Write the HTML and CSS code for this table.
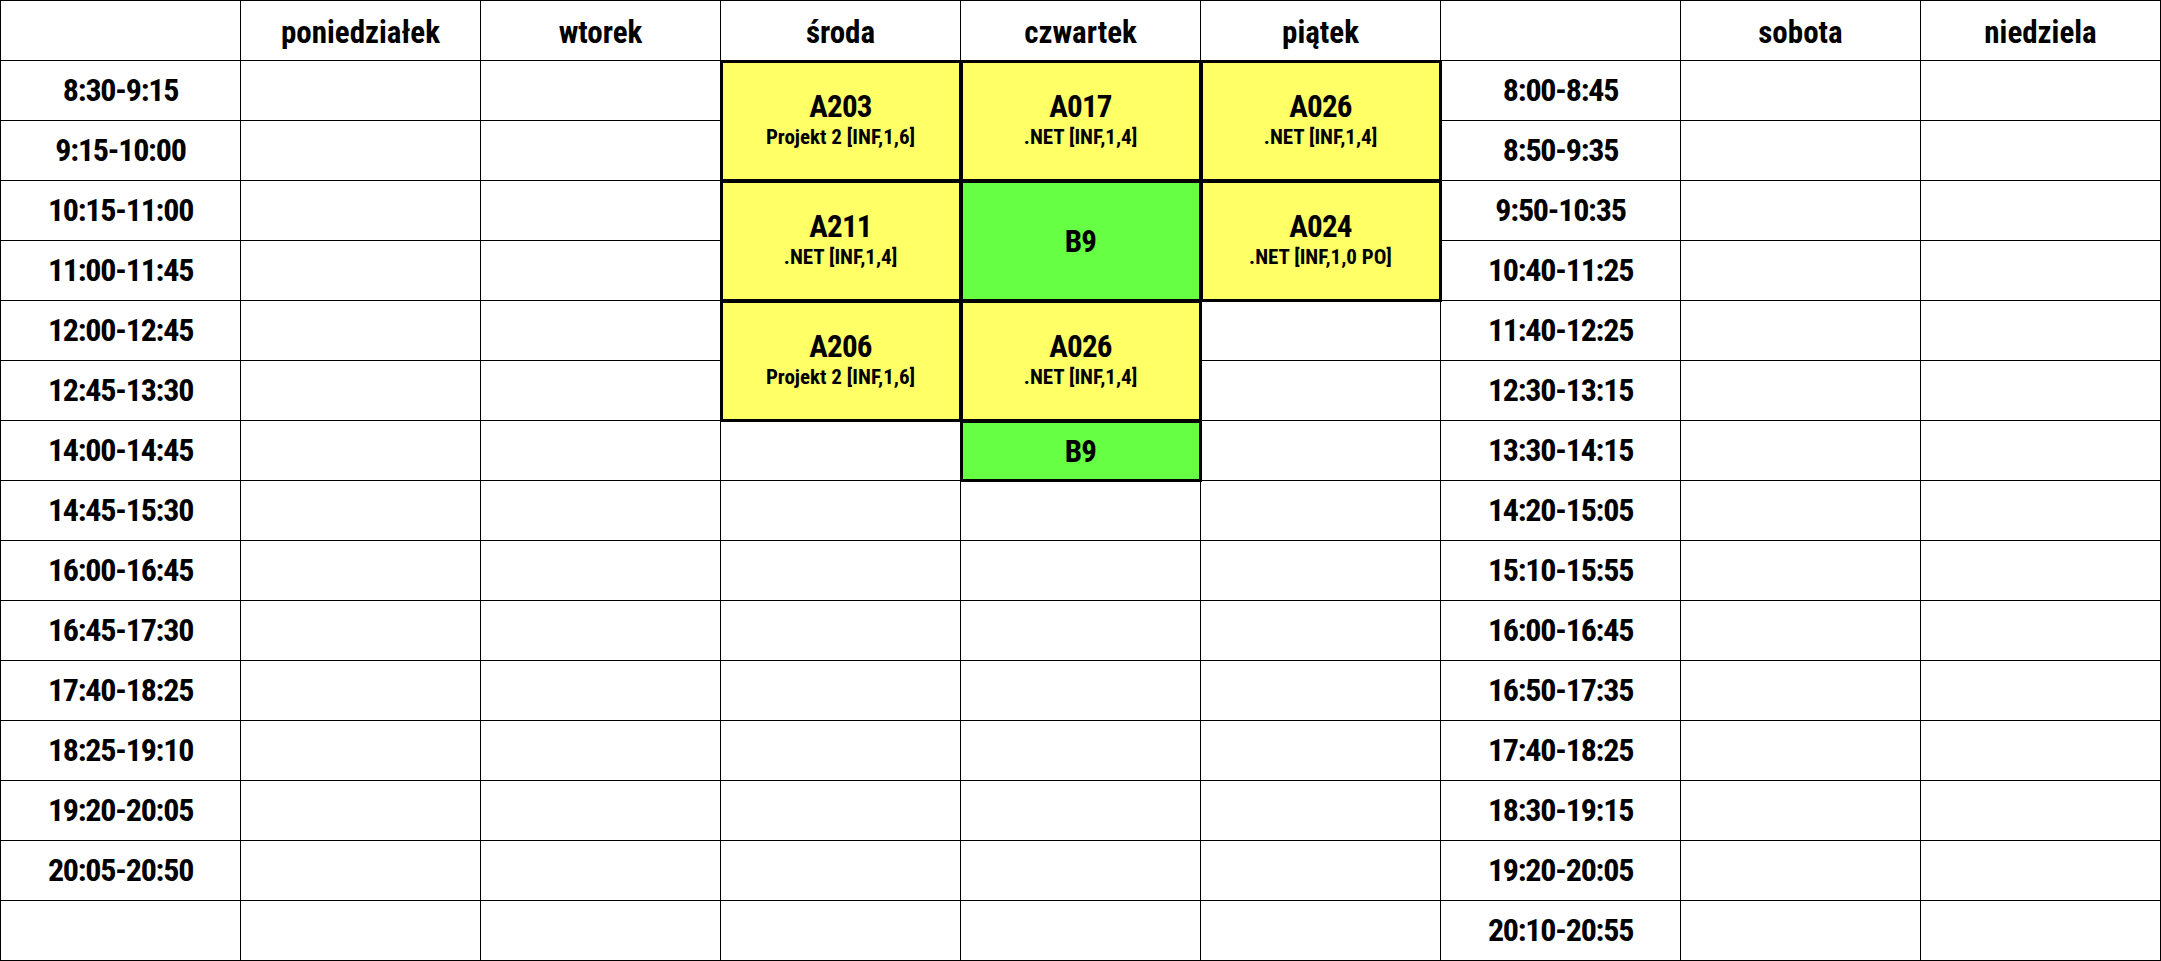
FILE: index.html
```html
<!DOCTYPE html>
<html lang="pl">
<head>
<meta charset="utf-8">
<title>Plan zajęć</title>
<link rel="stylesheet" href="styles.css">
</head>
<body>
<div class="plan">
  <div class="cell head"></div>
  <div class="cell head">poniedziałek</div>
  <div class="cell head">wtorek</div>
  <div class="cell head">środa</div>
  <div class="cell head">czwartek</div>
  <div class="cell head">piątek</div>
  <div class="cell head"></div>
  <div class="cell head">sobota</div>
  <div class="cell head">niedziela</div>

  <div class="cell time">8:30-9:15</div>
  <div class="cell"></div>
  <div class="cell"></div>
  <div class="cell block yellow span2"><span class="room">A203</span><span class="subj">Projekt 2 [INF,1,6]</span></div>
  <div class="cell block yellow span2"><span class="room">A017</span><span class="subj">.NET [INF,1,4]</span></div>
  <div class="cell block yellow span2"><span class="room">A026</span><span class="subj">.NET [INF,1,4]</span></div>
  <div class="cell time">8:00-8:45</div>
  <div class="cell"></div>
  <div class="cell"></div>

  <div class="cell time">9:15-10:00</div>
  <div class="cell"></div>
  <div class="cell"></div>
  <div class="cell time">8:50-9:35</div>
  <div class="cell"></div>
  <div class="cell"></div>

  <div class="cell time">10:15-11:00</div>
  <div class="cell"></div>
  <div class="cell"></div>
  <div class="cell block yellow span2"><span class="room">A211</span><span class="subj">.NET [INF,1,4]</span></div>
  <div class="cell block green span2"><span class="room">B9</span></div>
  <div class="cell block yellow span2"><span class="room">A024</span><span class="subj">.NET [INF,1,0 PO]</span></div>
  <div class="cell time">9:50-10:35</div>
  <div class="cell"></div>
  <div class="cell"></div>

  <div class="cell time">11:00-11:45</div>
  <div class="cell"></div>
  <div class="cell"></div>
  <div class="cell time">10:40-11:25</div>
  <div class="cell"></div>
  <div class="cell"></div>

  <div class="cell time">12:00-12:45</div>
  <div class="cell"></div>
  <div class="cell"></div>
  <div class="cell block yellow span2"><span class="room">A206</span><span class="subj">Projekt 2 [INF,1,6]</span></div>
  <div class="cell block yellow span2"><span class="room">A026</span><span class="subj">.NET [INF,1,4]</span></div>
  <div class="cell"></div>
  <div class="cell time">11:40-12:25</div>
  <div class="cell"></div>
  <div class="cell"></div>

  <div class="cell time">12:45-13:30</div>
  <div class="cell"></div>
  <div class="cell"></div>
  <div class="cell"></div>
  <div class="cell time">12:30-13:15</div>
  <div class="cell"></div>
  <div class="cell"></div>

  <div class="cell time">14:00-14:45</div>
  <div class="cell"></div>
  <div class="cell"></div>
  <div class="cell"></div>
  <div class="cell block green"><span class="room">B9</span></div>
  <div class="cell"></div>
  <div class="cell time">13:30-14:15</div>
  <div class="cell"></div>
  <div class="cell"></div>

  <div class="cell time">14:45-15:30</div>
  <div class="cell"></div><div class="cell"></div><div class="cell"></div><div class="cell"></div><div class="cell"></div>
  <div class="cell time">14:20-15:05</div>
  <div class="cell"></div><div class="cell"></div>

  <div class="cell time">16:00-16:45</div>
  <div class="cell"></div><div class="cell"></div><div class="cell"></div><div class="cell"></div><div class="cell"></div>
  <div class="cell time">15:10-15:55</div>
  <div class="cell"></div><div class="cell"></div>

  <div class="cell time">16:45-17:30</div>
  <div class="cell"></div><div class="cell"></div><div class="cell"></div><div class="cell"></div><div class="cell"></div>
  <div class="cell time">16:00-16:45</div>
  <div class="cell"></div><div class="cell"></div>

  <div class="cell time">17:40-18:25</div>
  <div class="cell"></div><div class="cell"></div><div class="cell"></div><div class="cell"></div><div class="cell"></div>
  <div class="cell time">16:50-17:35</div>
  <div class="cell"></div><div class="cell"></div>

  <div class="cell time">18:25-19:10</div>
  <div class="cell"></div><div class="cell"></div><div class="cell"></div><div class="cell"></div><div class="cell"></div>
  <div class="cell time">17:40-18:25</div>
  <div class="cell"></div><div class="cell"></div>

  <div class="cell time">19:20-20:05</div>
  <div class="cell"></div><div class="cell"></div><div class="cell"></div><div class="cell"></div><div class="cell"></div>
  <div class="cell time">18:30-19:15</div>
  <div class="cell"></div><div class="cell"></div>

  <div class="cell time">20:05-20:50</div>
  <div class="cell"></div><div class="cell"></div><div class="cell"></div><div class="cell"></div><div class="cell"></div>
  <div class="cell time">19:20-20:05</div>
  <div class="cell"></div><div class="cell"></div>

  <div class="cell time"></div>
  <div class="cell"></div><div class="cell"></div><div class="cell"></div><div class="cell"></div><div class="cell"></div>
  <div class="cell time">20:10-20:55</div>
  <div class="cell"></div><div class="cell"></div>
</div>
</body>
</html>
```

FILE: styles.css
```css
html, body {
  margin: 0;
  padding: 0;
  background: #fff;
}

body {
  font-family: "Roboto Condensed", "Open Sans Condensed", "Liberation Sans Narrow", "Open Sans", sans-serif;
  font-weight: 700;
  font-stretch: 75%;
  color: #000;
}

.plan {
  display: grid;
  grid-template-columns: repeat(9, 240px);
  grid-auto-rows: 60px;
  border-top: 1px solid #000;
  border-left: 1px solid #000;
  width: max-content;
}

.cell {
  box-sizing: border-box;
  border-right: 1px solid #000;
  border-bottom: 1px solid #000;
  text-align: center;
}

.head {
  font-size: 31px;
  line-height: 31px;
  padding-top: 16px;
}

.time {
  display: flex;
  align-items: center;
  justify-content: center;
  font-size: 32px;
  letter-spacing: -1.2px;
  line-height: 1;
  padding-bottom: 1px;
}

.block {
  display: flex;
  flex-direction: column;
  align-items: center;
  justify-content: center;
  outline: 3px solid #000;
  outline-offset: -2px;
  padding-top: 2px;
}

.span2 {
  grid-row: span 2;
}

.yellow {
  background: #ffff66;
}

.green {
  background: #66ff44;
}

.room {
  font-size: 31px;
  letter-spacing: -0.8px;
  line-height: 30px;
}

.subj {
  font-size: 21px;
  line-height: 30px;
}
```
